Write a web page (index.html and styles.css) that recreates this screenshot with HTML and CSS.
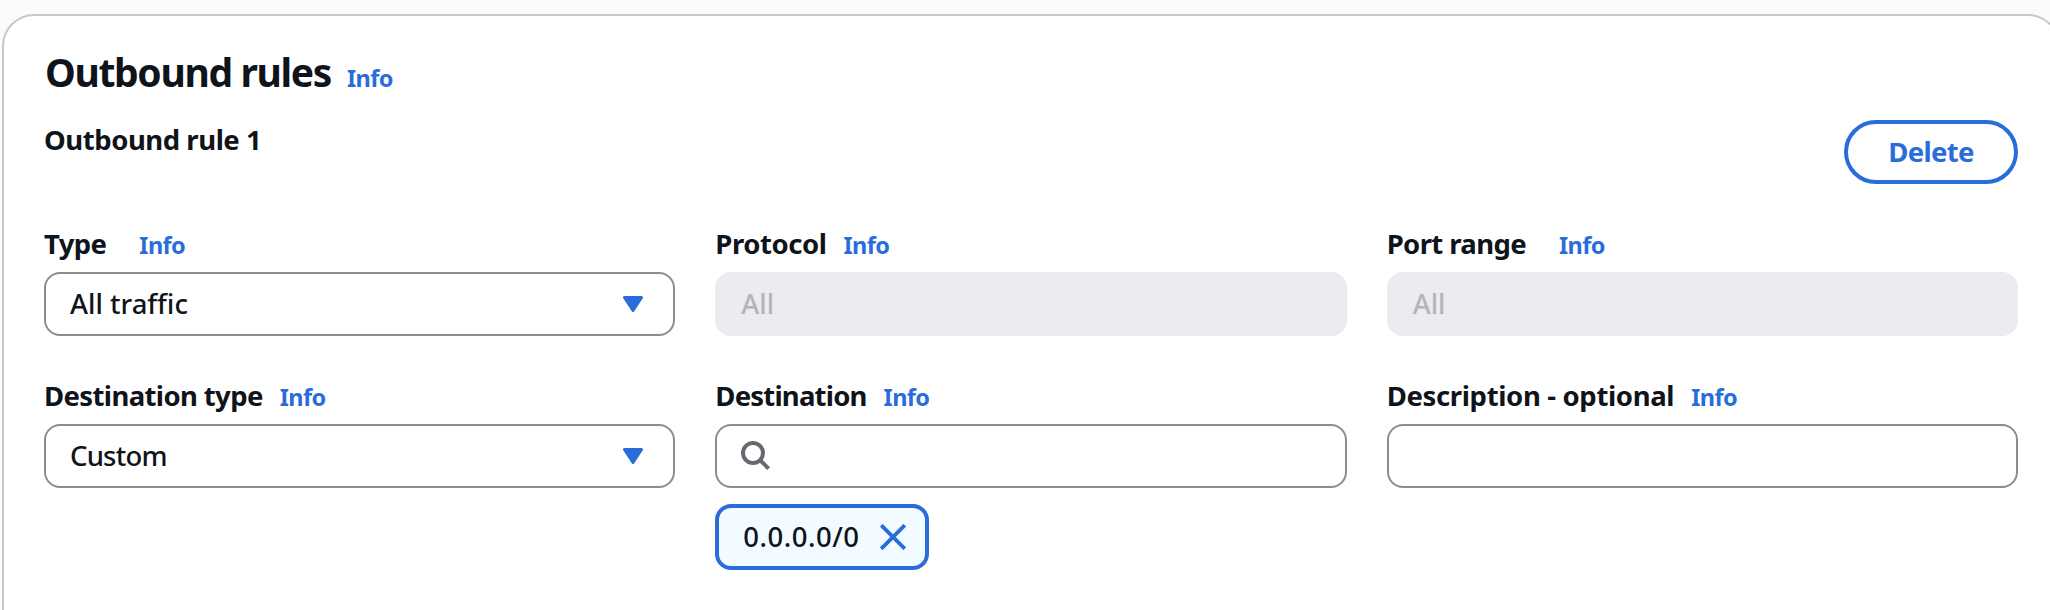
FILE: index.html
```html
<!DOCTYPE html>
<html lang="en">
<head>
<meta charset="utf-8">
<title>Outbound rules</title>
<link rel="stylesheet" href="styles.css">
</head>
<body>
<main class="card">
  <header class="card-header">
    <h2 class="title">Outbound rules</h2>
    <a class="info">Info</a>
  </header>
  <div class="rule-header">
    <h3 class="rule-title">Outbound rule 1</h3>
    <button class="delete" type="button">Delete</button>
  </div>
  <div class="grid">
    <div class="field">
      <div class="label-row wide"><span class="label">Type</span><a class="info">Info</a></div>
      <div class="control"><span class="value">All traffic</span>
        <svg class="caret" viewBox="0 0 20 16"><path d="M1.5 1.5h17L10 14.5z" fill="#2b6cdb" stroke="#2b6cdb" stroke-width="3" stroke-linejoin="round"/></svg>
      </div>
    </div>
    <div class="field">
      <div class="label-row"><span class="label protocol">Protocol</span><a class="info">Info</a></div>
      <div class="control disabled"><span class="value">All</span></div>
    </div>
    <div class="field">
      <div class="label-row wide"><span class="label">Port range</span><a class="info">Info</a></div>
      <div class="control disabled"><span class="value">All</span></div>
    </div>
    <div class="field">
      <div class="label-row"><span class="label">Destination type</span><a class="info">Info</a></div>
      <div class="control"><span class="value custom">Custom</span>
        <svg class="caret" viewBox="0 0 20 16"><path d="M1.5 1.5h17L10 14.5z" fill="#2b6cdb" stroke="#2b6cdb" stroke-width="3" stroke-linejoin="round"/></svg>
      </div>
    </div>
    <div class="field">
      <div class="label-row"><span class="label dest">Destination</span><a class="info">Info</a></div>
      <div class="control search">
        <svg class="search-icon" viewBox="0 0 30 30"><circle cx="12" cy="12" r="10" fill="none" stroke="#656871" stroke-width="4"/><path d="M19 19l8.6 8.6" stroke="#656871" stroke-width="4"/></svg>
      </div>
      <div class="token"><span class="token-text">0.0.0.0/0</span>
        <svg class="close" viewBox="0 0 26 26"><path d="M1.2 1.2l23.6 23.6M24.8 1.2L1.2 24.8" stroke="#2b6cdb" stroke-width="3.8"/></svg>
      </div>
    </div>
    <div class="field">
      <div class="label-row"><span class="label desc">Description - optional</span><a class="info">Info</a></div>
      <div class="control"></div>
    </div>
  </div>
</main>
</body>
</html>
```

FILE: styles.css
```css
* { box-sizing: border-box; }
html, body { margin: 0; height: 610px; overflow: hidden; }
body {
  background: #fbfbfb;
  color: #0f141a;
  font-family: "Noto Sans", "Open Sans", sans-serif;
  padding: 14px 0 0 2px;
}
.card {
  width: 2058px;
  height: 596px;
  padding: 30px 40px 0;
  border: 2px solid #c6c6cd;
  border-bottom: 0;
  border-radius: 32px 32px 0 0;
  background: #fff;
}
h2, h3 { margin: 0; }
.card-header { display: flex; align-items: baseline; height: 56px; line-height: 52px; }
.title { width: 303px; padding-left: 1px; font-size: 39px; font-weight: 700; letter-spacing: -1.35px; white-space: nowrap; }
.info { color: #2b6cdb; font-size: 23.5px; font-weight: 700; letter-spacing: -0.6px; white-space: nowrap; }
.rule-header { display: flex; justify-content: space-between; align-items: flex-start; height: 122px; padding-top: 18px; }
.rule-title { font-size: 27.5px; font-weight: 700; letter-spacing: -0.45px; line-height: 40px; white-space: nowrap; }
.delete {
  width: 174px;
  height: 64px;
  padding: 0;
  border: 4px solid #2b6cdb;
  border-radius: 32px;
  background: #fff;
  color: #2b6cdb;
  font: 700 27.5px/54px "Noto Sans", "Open Sans", sans-serif;
  letter-spacing: -0.7px;
}
.grid { display: grid; grid-template-columns: repeat(3, 1fr); column-gap: 40px; row-gap: 48px; }
.label-row { display: flex; align-items: baseline; gap: 17px; height: 40px; line-height: 40px; margin-bottom: 8px; }
.label-row.wide { gap: 33px; }
.field { height: 104px; }
.label { font-size: 27.5px; font-weight: 700; letter-spacing: -0.62px; white-space: nowrap; }
.label.protocol { letter-spacing: -0.45px; }
.label.dest { letter-spacing: -0.8px; }
.label.desc { letter-spacing: -0.35px; }
.control {
  display: flex;
  align-items: center;
  justify-content: space-between;
  height: 64px;
  padding: 0 30px 0 24px;
  border: 2px solid #8c8c94;
  border-radius: 16px;
  background: #fff;
}
.control.disabled { border-color: #ebebf0; background: #ebebf0; color: #b4b4bb; }
.value, .token-text { font-size: 27.5px; font-weight: 500; line-height: 40px; white-space: nowrap; }
.value.custom { letter-spacing: -0.8px; }
.token-text { letter-spacing: 0.5px; }
.caret { width: 20px; height: 16px; }
.search-icon { width: 30px; height: 30px; }
.token {
  display: flex;
  align-items: center;
  justify-content: space-between;
  width: 214px;
  height: 66px;
  margin-top: 16px;
  padding: 0 19px 0 24px;
  border: 4px solid #2b6cdb;
  border-radius: 16px;
  background: #f2fbff;
}
.close { width: 26px; height: 26px; }
```
